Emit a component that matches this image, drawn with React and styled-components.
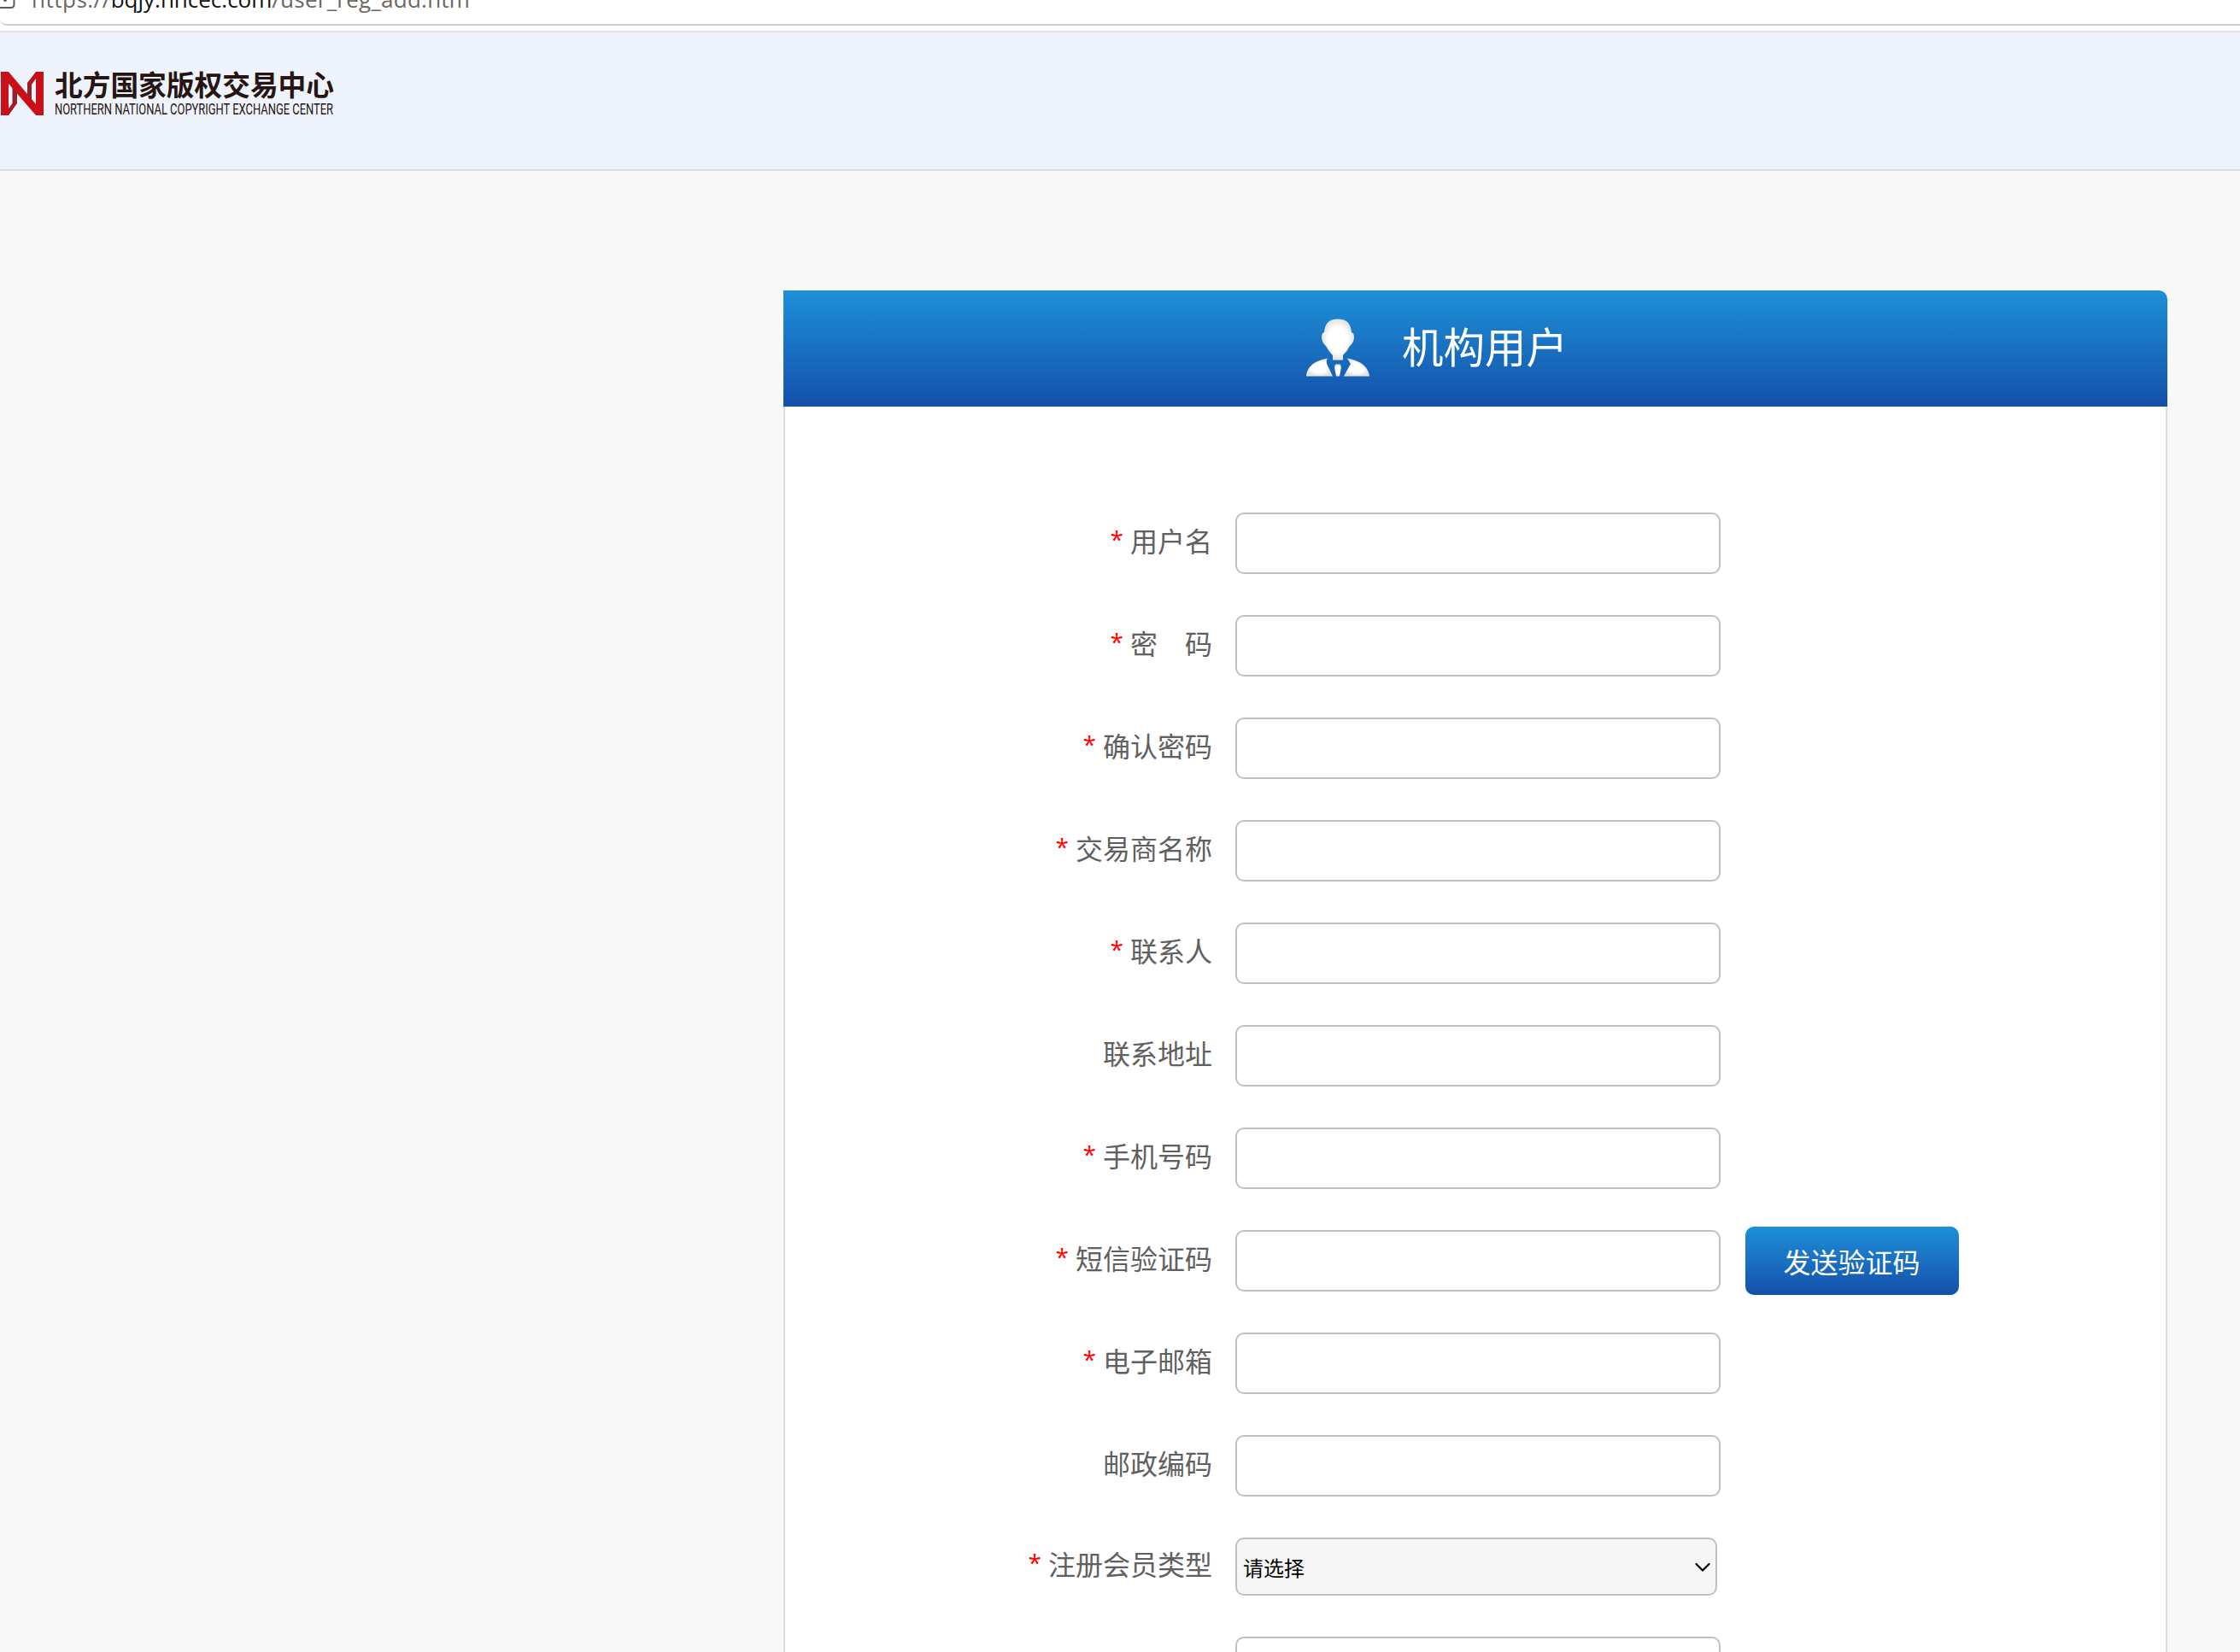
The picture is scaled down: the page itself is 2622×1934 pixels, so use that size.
import React from 'react';
import styled, { createGlobalStyle } from 'styled-components';

const Global = createGlobalStyle`
  * { box-sizing: border-box; }
  html, body { margin: 0; height: 1934px; overflow: hidden; background: #f8f8f8; }
  body { font-family: "Noto Sans CJK SC", sans-serif; font-weight: 400; }
`;
const Page = styled.div`
  width: 2622px; height: 1934px; overflow: hidden; display: flex; flex-direction: column;
`;
const AddressBar = styled.div`
  flex: none; height: 36px; background: #fff;
  display: flex; flex-direction: column;
`;
const AddressField = styled.div`
  height: 30px; border-bottom: 2px solid #cfcfcf; border-bottom-left-radius: 8px;
  display: flex; align-items: flex-start; overflow: hidden;
`;
const PageInfo = styled.svg`flex: none; width: 20px; height: 14px; margin-right: 17px;`;
const Url = styled.div`
  font-family: "Open Sans", "Noto Sans", sans-serif; font-size: 26px; line-height: 36px;
  margin-top: -19px; color: #6b6661; white-space: nowrap;
`;
const UrlPart = styled.span`
  letter-spacing: ${p => p.$track || 0}px; color: ${p => (p.$host ? '#111' : 'inherit')};
`;
const SiteHeader = styled.header`
  flex: none; height: 164px; background: #eff3fb; border-top: 2px solid #e3e3e3; border-bottom: 2px solid #d5dfeb;
  padding: 46px 0 0 1px; display: flex; align-items: flex-start; gap: 14px;
`;
const LogoMark = styled.svg`flex: none; width: 50px; height: 51px;`;
const LogoText = styled.svg`flex: none; width: 330px; height: 54px; overflow: visible;`;
const Main = styled.main`padding: 140px 0 0 917px;`;
const Card = styled.section`width: 1620px;`;
const CardHead = styled.div`
  height: 136px; border-top-right-radius: 10px; background: linear-gradient(#1e90d8, #1450aa);
  display: flex; align-items: flex-start; padding: 32px 0 0 611px; gap: 37px;
`;
const UserIcon = styled.svg`flex: none; width: 76px; height: 70px;`;
const Title = styled.h1`margin: -2px 0 0; font-size: 48.5px; line-height: 68px; font-weight: 400; color: #fff;`;
const CardBody = styled.form`
  height: 1500px; background: #fff; border: 2px solid #ddd; border-top: 0; padding-top: 124px;
  display: flex; flex-direction: column; gap: 48px;
`;
const Row = styled.div`flex: none; display: flex; align-items: center; height: ${p => p.$h || 72}px;`;
const Label = styled.label`
  flex: none; width: 500px; margin-right: 27px; text-align: right; font-size: 32px; line-height: 48px;
  font-weight: 400; color: #606060; white-space: pre; margin-top: -8px;
`;
const Star = styled.span`
  display: inline-block; line-height: 40px; transform: translateY(-4px);
  color: #f00; font-family: "Open Sans", sans-serif; font-size: 28px; font-weight: 400; margin-right: 8px;
`;
const Input = styled.input`
  width: 568px; height: 72px; border: 2px solid #c0c0c0; border-radius: 10px; background: #fff; outline: 0; padding: 0 12px;
`;
const Select = styled.div`
  width: 564px; height: 68px; border: 2px solid #c0c0c0; border-radius: 10px; background: #f6f6f6;
  display: flex; align-items: center; justify-content: space-between; padding: 2px 6px 0 7px;
  font-size: 24px; line-height: 34px; color: #000;
`;
const Chevron = styled.svg`width: 18px; height: 12px;`;
const SendButton = styled.button`
  flex: none; width: 250px; height: 80px; margin-left: 29px; border: 0; border-radius: 10px; padding: 0 1px 0 0;
  background: linear-gradient(#1e90d8, #1450aa); color: #fff; font: 400 32px/48px "Noto Sans CJK SC", sans-serif;
`;

const fields = [
  ['用户名', true], ['密　码', true], ['确认密码', true], ['交易商名称', true], ['联系人', true],
  ['联系地址', false], ['手机号码', true], ['短信验证码', true, 'code'], ['电子邮箱', true],
  ['邮政编码', false], ['注册会员类型', true, 'select'], ['', false],
];

function Field({ label, required, kind }) {
  return (
    <Row $h={kind === 'select' ? 68 : 72}>
      <Label>{required && <Star>*</Star>}{label}</Label>
      {kind === 'select' ? (
        <Select>
          <span>请选择</span>
          <Chevron viewBox="0 0 18 12"><path d="M1.5 2 L9 9.5 L16.5 2" fill="none" stroke="#000" strokeWidth="2.2" strokeLinecap="round" /></Chevron>
        </Select>
      ) : <Input type="text" />}
      {kind === 'code' && <SendButton type="button">发送验证码</SendButton>}
    </Row>
  );
}

export default function App() {
  return (
    <Page>
      <Global />
      <AddressBar>
        <AddressField>
          <PageInfo viewBox="0 0 20 14">
            <path d="M0 9 H12.5 Q16.5 9 16.5 5 V0" fill="none" stroke="#5f5a55" strokeWidth="2" />
            <circle cx="6" cy="0" r="2" fill="#5f5a55" />
          </PageInfo>
          <Url>
            <UrlPart $track={0.5}>https://</UrlPart>
            <UrlPart $host>bqjy.nncec.com</UrlPart>
            <UrlPart $track={0.25}>/user_reg_add.htm</UrlPart>
          </Url>
        </AddressField>
      </AddressBar>
      <SiteHeader>
        <LogoMark viewBox="0 0 50 51">
          <path d="M13.5 16 L19 22 V37 L13.5 39Z M31 13 L36 14 V34 L31 28Z" fill="#8f242c" />
          <path d="M13.5 37 L19 37 L9 51 V43Z M41 0 L31 13 V18 L36 15 L41 8Z" fill="#b3161f" />
          <path d="M0 0 H9 L41 38 V0 H50 V51 H41 L9 14 V51 H0Z" fill="#cb0f19" />
        </LogoMark>
        <LogoText viewBox="0 0 330 54">
          <text x="-1" y="28" textLength="327" lengthAdjust="spacingAndGlyphs" fontFamily="Noto Sans CJK SC" fontSize="33.5" fontWeight="700" fill="#261512">北方国家版权交易中心</text>
          <text x="-1" y="50" textLength="326" lengthAdjust="spacingAndGlyphs" fontFamily="Roboto" fontSize="18.5" fill="#261512">NORTHERN NATIONAL COPYRIGHT EXCHANGE CENTER</text>
        </LogoText>
      </SiteHeader>
      <Main>
        <Card>
          <CardHead>
            <UserIcon viewBox="0 0 76 70">
              <defs>
                <radialGradient id="face"><stop offset="0.6" stopColor="#fff" /><stop offset="1" stopColor="#e0e2e4" /></radialGradient>
              </defs>
              <g fill="url(#face)">
                <path d="M38 1.5 C49 1.5 53 7 54 17 Q57.5 18 57 24 Q56 30 52 33 Q49 39 44 44 V49.5 H32 V44 Q27 39 24 33 Q20 30 19 24 Q18.500 18 22 17 C23 7 27 1.500 38 1.500Z" />
                <path d="M26 47.500 Q23 51 27 58 L32 68.500 H1 Q2 52 26 47.500Z" />
                <path d="M49 47.500 L53 54 L49 61 L45 68.500 H75 Q73 52 49 47.500Z" />
                <path d="M35 54.500 H41 L42 58 L40 68.500 H36 L34 58Z" />
              </g>
            </UserIcon>
            <Title>机构用户</Title>
          </CardHead>
          <CardBody>
            {fields.map(([label, required, kind], i) => <Field key={i} label={label} required={required} kind={kind} />)}
          </CardBody>
        </Card>
      </Main>
    </Page>
  );
}
